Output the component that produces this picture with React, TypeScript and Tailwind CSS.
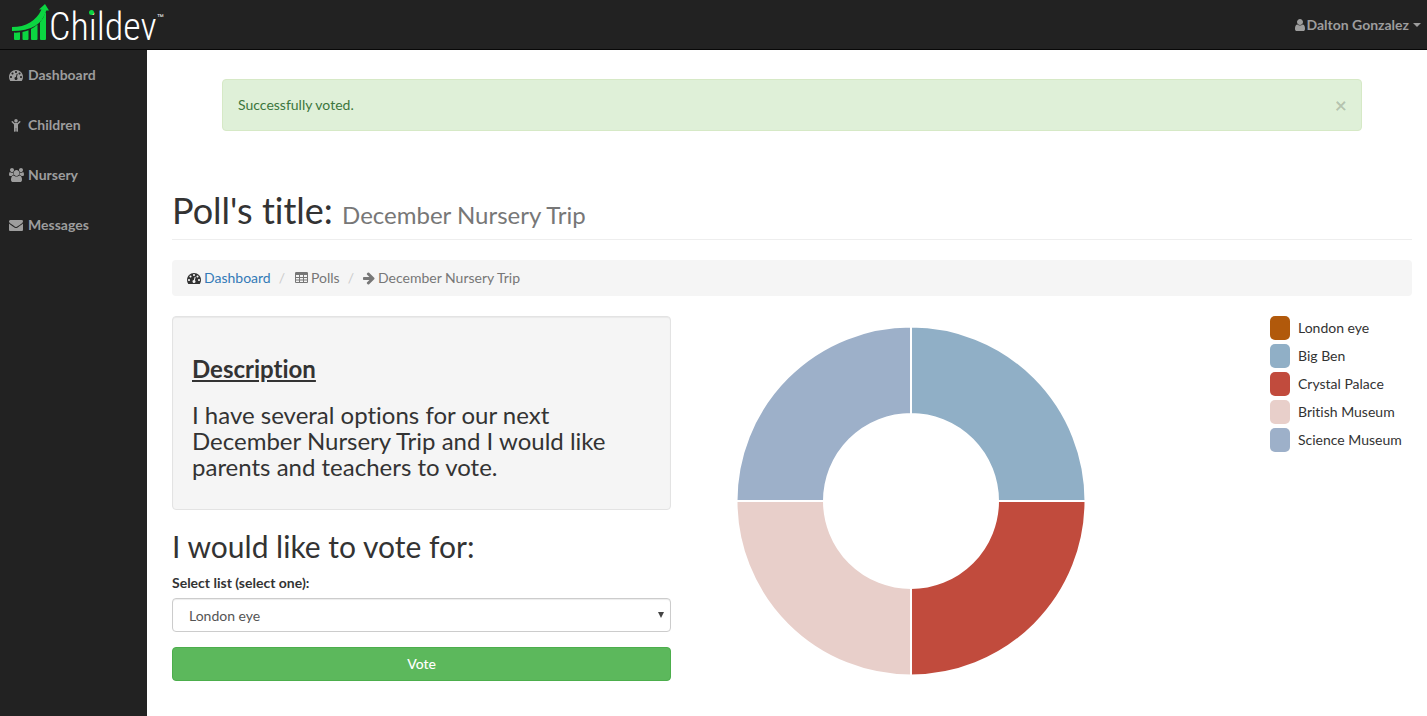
import type { ReactNode } from 'react';

type IconProps = { className?: string };

function Glyph({ width, d, className = '' }: { width: number; d: string; className?: string }) {
  return (
    <svg
      viewBox={`0 0 ${width} 1792`}
      className={`h-3.5 shrink-0 fill-current ${className}`}
      aria-hidden="true"
      fillRule="evenodd"
    >
      <path d={d} />
    </svg>
  );
}

const GaugeIcon = ({ className }: IconProps) => (
  <Glyph
    className={className}
    width={1792}
    d="M384 1152q0-53-37.5-90.5t-90.5-37.5-90.5 37.5-37.5 90.5 37.5 90.5 90.5 37.5 90.5-37.5 37.5-90.5zm192-448q0-53-37.5-90.5t-90.5-37.5-90.5 37.5-37.5 90.5 37.5 90.5 90.5 37.5 90.5-37.5 37.5-90.5zm428 481l101-382q6-26-7.5-48.5t-38.5-29.5-48 6.5-30 39.5l-101 382q-60 5-107 43.5t-63 98.5q-20 77 20 146t117 89 146-20 89-117q16-60-6-117t-72-91zm660-33q0-53-37.5-90.5t-90.5-37.5-90.5 37.5-37.5 90.5 37.5 90.5 90.5 37.5 90.5-37.5 37.5-90.5zm-640-640q0-53-37.5-90.5t-90.5-37.5-90.5 37.5-37.5 90.5 37.5 90.5 90.5 37.5 90.5-37.5 37.5-90.5zm448 192q0-53-37.5-90.5t-90.5-37.5-90.5 37.5-37.5 90.5 37.5 90.5 90.5 37.5 90.5-37.5 37.5-90.5zm320 448q0 261-141 483-19 29-54 29h-1402q-35 0-54-29-141-221-141-483 0-182 71-348t191-286 286-191 348-71 348 71 286 191 191 286 71 348z"
  />
);

const ChildIcon = ({ className }: IconProps) => (
  <Glyph
    className={className}
    width={1280}
    d="M1188 548l-292 292v824q0 46-33 79t-79 33-79-33-33-79v-384h-64v384q0 46-33 79t-79 33-79-33-33-79v-824l-292-292q-28-28-28-68t28-68q29-28 68.5-28t67.5 28l228 228h368l228-228q28-28 68-28t68 28q28 29 28 68.5t-28 67.5zM864 352q0 93-65.5 158.5t-158.5 65.5-158.5-65.5-65.5-158.5 65.5-158.5 158.5-65.5 158.5 65.5 65.5 158.5z"
  />
);

const GroupIcon = ({ className }: IconProps) => (
  <Glyph
    className={className}
    width={1920}
    d="M593 896q-162 5-265 128h-134q-82 0-138-40.5t-56-118.5q0-353 124-353 6 0 43.5 21t97.5 42.5 119 21.5q67 0 133-23-5 37-5 66 0 139 81 256zm1071 637q0 120-73 189.5t-194 69.5h-874q-121 0-194-69.5t-73-189.5q0-53 3.5-103.5t14-109 26.5-108.5 43-97.5 62-81 85.5-53.5 111.5-20q10 0 43 21.5t73 48 107 48 135 21.5 135-21.5 107-48 73-48 43-21.5q61 0 111.5 20t85.5 53.5 62 81 43 97.5 26.5 108.5 14 109 3.5 103.5zm-1024-1277q0 106-75 181t-181 75-181-75-75-181 75-181 181-75 181 75 75 181zm704 384q0 159-112.5 271.5t-271.5 112.5-271.5-112.5-112.5-271.5 112.5-271.5 271.5-112.5 271.5 112.5 112.5 271.5zm576 225q0 78-56 118.5t-138 40.5h-134q-103-123-265-128 81-117 81-256 0-29-5-66 66 23 133 23 59 0 119-21.5t97.5-42.5 43.5-21q124 0 124 353zm-128-609q0 106-75 181t-181 75-181-75-75-181 75-181 181-75 181 75 75 181z"
  />
);

const EnvelopeIcon = ({ className }: IconProps) => (
  <Glyph
    className={className}
    width={1792}
    d="M1792 710v794q0 66-47 113t-113 47h-1472q-66 0-113-47t-47-113v-794q44 49 101 87 362 246 497 345 57 42 92.5 65.5t94.5 48 110 24.5h2q51 0 110-24.5t94.5-48 92.5-65.5q170-123 498-345 57-39 100-87zm0-294q0 79-49 151t-122 123q-376 261-468 325-10 7-42.5 31t-54 38.5-52 32.5-57.5 27-50 9h-2q-23 0-50-9t-57.5-27-52-32.5-54-38.5-42.5-31q-91-64-262-182.5t-205-142.5q-62-42-117-115.5t-55-136.5q0-78 41.5-130t118.5-52h1472q65 0 112.5 47t47.5 113z"
  />
);

const UserIcon = ({ className = '' }: IconProps) => (
  <svg viewBox="256 0 1280 1792" className={`h-3.5 shrink-0 fill-current ${className}`} aria-hidden="true">
    <path d="M1536 1399q0 109-62.5 187t-150.5 78h-854q-88 0-150.5-78t-62.5-187q0-85 8.5-160.5t31.5-152 58.5-131 94-89 134.5-34.5q131 128 313 128t313-128q76 0 134.5 34.5t94 89 58.5 131 31.5 152 8.5 160.5zm-256-887q0 159-112.5 271.5t-271.5 112.5-271.5-112.5-112.5-271.5 112.5-271.5 271.5-112.5 271.5 112.5 112.5 271.5z" />
  </svg>
);

const TableIcon = ({ className }: IconProps) => (
  <Glyph
    className={className}
    width={1664}
    d="M160 128h1344q66 0 113 47t47 113v1088q0 66-47 113t-113 47h-1344q-66 0-113-47t-47-113v-1088q0-66 47-113t113-47zM128 512v256h384v-256zM640 512v256h384v-256zM1152 512v256h384v-256zM128 896v192h384v-192zM640 896v192h384v-192zM1152 896v192h384v-192zM128 1216v192h384v-192zM640 1216v192h384v-192zM1152 1216v192h384v-192z"
  />
);

const ArrowIcon = ({ className }: IconProps) => (
  <Glyph
    className={className}
    width={1664}
    d="M1600 960q0 54-37 91l-651 651q-39 37-91 37-51 0-90-37l-75-75q-38-38-38-91t38-91l293-293h-704q-52 0-84.5-37.5t-32.5-90.5v-128q0-53 32.5-90.5t84.5-37.5h704l-293-294q-38-36-38-90t38-90l75-75q38-38 90-38 53 0 91 38l651 651q37 35 37 90z"
  />
);

function Logo() {
  return (
    <a href="#home" className="flex h-full items-start pl-3 text-white" aria-label="Childev">
      <svg viewBox="0 0 37 40" className="mt-1 h-10 w-[37px]" fill="#0bd541" aria-hidden="true">
        <path d="M2 28.6q3 .2 6-.3v6.700q0 1-1 1h-4q-1 0-1-1zM10.500 28q3-.5 6-1.800v8.800q0 1-1 1h-4q-1 0-1-1zM19 25q3.500-1.700 6.500-4.500v14.500q0 1-1 1h-4.500q-1 0-1-1zM28 18.300q3.500-4 5.500-9.800l.5 0v26.500q0 1-1 1h-4q-1 0-1-1z" />
        <path d="M0 23q10.500 0 18-4.500t11.500-13h-2.500l6-5.500 4 6.500h-2.700q-3 10.500-11.300 15.500t-23 5z" />
      </svg>
      <span className="relative pt-0.5 font-['Roboto_Condensed_Light','Roboto_Condensed','Roboto',sans-serif] text-[38px] leading-[50px]">
        Childev
        <span className="absolute top-2.5 left-10 size-[5px] rounded-full bg-[#0bd541]" />
      </span>
      <span className="mt-3 font-['Liberation_Sans',sans-serif] text-[7px] leading-[10px]">™</span>
    </a>
  );
}

function NavLink({ icon, children }: { icon: ReactNode; children: ReactNode }) {
  return (
    <a href={`#${children}`} className="flex h-[50px] items-center gap-1 pl-2 font-bold">
      <span className="flex w-4 justify-center">{icon}</span>
      {children}
    </a>
  );
}

const options = [
  { name: 'London eye', swatch: 'bg-[#b1590b]', fill: 'fill-[#b1590b]', votes: 0 },
  { name: 'Big Ben', swatch: 'bg-[#90afc6]', fill: 'fill-[#90afc6]', votes: 1 },
  { name: 'Crystal Palace', swatch: 'bg-[#c14b3d]', fill: 'fill-[#c14b3d]', votes: 1 },
  { name: 'British Museum', swatch: 'bg-[#e8cfca]', fill: 'fill-[#e8cfca]', votes: 1 },
  { name: 'Science Museum', swatch: 'bg-[#9db0c9]', fill: 'fill-[#9db0c9]', votes: 1 },
];

function Donut() {
  const cx = 210;
  const cy = 185;
  const outer = 174.5;
  const inner = 87;
  const total = options.reduce((sum, o) => sum + o.votes, 0);
  let angle = 0;
  const point = (r: number, a: number) => `${cx + r * Math.sin(a)} ${cy - r * Math.cos(a)}`;
  return (
    <svg viewBox="0 0 420 370" className="w-[420px] shrink" role="img" aria-label="Poll results">
      {options
        .filter((o) => o.votes > 0)
        .map((o) => {
          const start = angle;
          const end = start + (o.votes / total) * Math.PI * 2;
          angle = end;
          const large = end - start > Math.PI ? 1 : 0;
          return (
            <path
              key={o.name}
              className={o.fill}
              stroke="#fff"
              strokeWidth="2"
              d={`M${point(outer, start)}A${outer} ${outer} 0 ${large} 1 ${point(outer, end)}L${point(inner, end)}A${inner} ${inner} 0 ${large} 0 ${point(inner, start)}Z`}
            />
          );
        })}
    </svg>
  );
}

export default function App() {
  return (
    <div className="flex min-h-screen flex-col bg-white font-['Lato',sans-serif] text-sm leading-5 text-[#333] [font-variant-ligatures:none]">
      <header className="flex h-[50px] items-center justify-between border-b border-[#080808] bg-[#222] text-[#9d9d9d]">
        <Logo />
        <button type="button" className="flex items-center gap-0.5 pr-1.5 font-bold">
          <UserIcon />
          Dalton Gonzalez
          <span className="ml-0.5 border-x-4 border-t-4 border-x-transparent border-t-current" />
        </button>
      </header>

      <div className="flex flex-1">
        <nav className="w-[147px] shrink-0 bg-[#222] text-[#9d9d9d]">
          <NavLink icon={<GaugeIcon />}>Dashboard</NavLink>
          <NavLink icon={<ChildIcon />}>Children</NavLink>
          <NavLink icon={<GroupIcon />}>Nursery</NavLink>
          <NavLink icon={<EnvelopeIcon />}>Messages</NavLink>
        </nav>

        <main className="min-w-0 flex-1 pt-[29px] pr-[15px] pl-[25px]">
          <div
            role="alert"
            className="mx-[50px] flex items-center justify-between rounded border border-[#d6e9c6] bg-[#dff0d8] py-[15px] pr-3.5 pl-[15px] text-[#3c763d]"
          >
            <p>Successfully voted.</p>
            <button type="button" aria-label="Close" className="text-[21px] leading-5 font-bold text-black/20">
              ×
            </button>
          </div>

          <h1 className="mt-[59px] border-b border-[#eee] pb-[9px] text-4xl leading-10">
            Poll&#39;s title: <small className="text-2xl leading-6 text-[#777]">December Nursery Trip</small>
          </h1>

          <ol className="mt-5 flex h-9 items-center rounded bg-[#f5f5f5] px-[15px] text-[#777]">
            <li className="flex items-center gap-[3px] text-[#337ab7]">
              <GaugeIcon className="text-[#333]" />
              <a href="#dashboard">Dashboard</a>
            </li>
            <li className="px-2 text-[#ccc]">/</li>
            <li className="flex items-center gap-[3px]">
              <TableIcon className="ml-0.5" />
              Polls
            </li>
            <li className="px-2 text-[#ccc]">/</li>
            <li className="flex items-center gap-[3px]">
              <ArrowIcon />
              December Nursery Trip
            </li>
          </ol>

          <div className="mt-5 grid grid-cols-12 gap-[30px]">
            <div className="col-span-5">
              <section className="rounded border border-[#e3e3e3] bg-[#f5f5f5] px-[19px] pt-[39px] pb-[29px] shadow-[inset_0_1px_1px_rgba(0,0,0,0.05)]">
                <h2 className="text-2xl leading-[26px] font-bold underline">Description</h2>
                <p className="mt-5 text-2xl leading-[26px]">
                  I have several options for our next December Nursery Trip and I would like parents and teachers to
                  vote.
                </p>
              </section>

              <form onSubmit={(event) => event.preventDefault()}>
                <h2 className="mt-5 text-3xl leading-[33px]">I would like to vote for:</h2>
                <label htmlFor="choice" className="mt-2.5 mb-[5px] block font-bold">
                  Select list (select one):
                </label>
                <div className="relative">
                  <select
                    id="choice"
                    className="block h-[34px] w-full appearance-none rounded border border-[#ccc] bg-white px-4 pt-0.5 text-[#555] shadow-[inset_0_1px_1px_rgba(0,0,0,0.075)]"
                  >
                    {options.map((o) => (
                      <option key={o.name}>{o.name}</option>
                    ))}
                  </select>
                  <svg
                    viewBox="0 0 6 6"
                    className="pointer-events-none absolute top-3.5 right-[7px] size-1.5 fill-[#444]"
                    aria-hidden="true"
                  >
                    <path d="M0 0h6L3 6z" />
                  </svg>
                </div>
                <button
                  type="submit"
                  className="mt-[15px] h-[34px] w-full rounded border border-[#4cae4c] bg-[#5cb85c] font-medium text-white"
                >
                  Vote
                </button>
              </form>
            </div>

            <div className="col-span-7 flex items-start justify-between">
              <Donut />
              <ul className="flex w-[142px] shrink-0 flex-col gap-1">
                {options.map((o) => (
                  <li key={o.name} className="flex items-center gap-2">
                    <span className={`h-6 w-5 shrink-0 rounded-[5px] ${o.swatch}`} />
                    {o.name}
                  </li>
                ))}
              </ul>
            </div>
          </div>
        </main>
      </div>
    </div>
  );
}
